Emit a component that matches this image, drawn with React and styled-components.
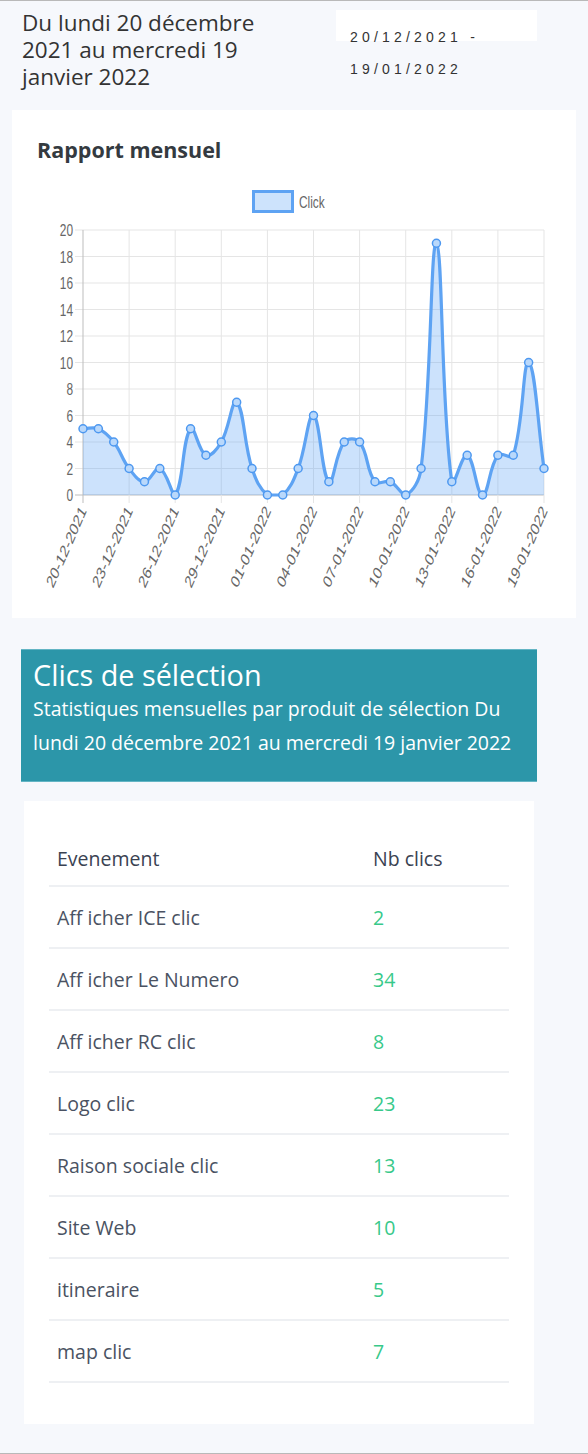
import React from "react";
import styled, { createGlobalStyle } from "styled-components";

const GlobalStyle = createGlobalStyle`
  body {
    margin: 0;
    background: #f6f8fc;
    font-family: "Open Sans", "Noto Sans", sans-serif;
  }
`;

const values = [5, 5, 4, 2, 1, 2, 0, 5, 3, 4, 7, 2, 0, 0, 2, 6, 1, 4, 4, 1, 1, 0, 2, 19, 1, 3, 0, 3, 3, 10, 2];
const startDate = new Date(2021, 11, 20);

const events = [
  { name: "Aff icher ICE clic", count: 2 },
  { name: "Aff icher Le Numero", count: 34 },
  { name: "Aff icher RC clic", count: 8 },
  { name: "Logo clic", count: 23 },
  { name: "Raison sociale clic", count: 13 },
  { name: "Site Web", count: 10 },
  { name: "itineraire", count: 5 },
  { name: "map clic", count: 7 },
];

// chart geometry (svg coords)
const W = 564;
const H = 430;
const L = 71;
const R = 532;
const T = 50;
const B = 315;
const xAt = (i) => L + (i * (R - L)) / (values.length - 1);
const yAt = (v) => B - (v * (B - T)) / 20;
const clampY = (y) => Math.min(B, Math.max(T, y));

const fmtDate = (i) => {
  const d = new Date(startDate);
  d.setDate(d.getDate() + i);
  const p = (n) => String(n).padStart(2, "0");
  return `${p(d.getDate())}-${p(d.getMonth() + 1)}-${d.getFullYear()}`;
};

const buildPath = () => {
  const pts = values.map((v, i) => ({ x: xAt(i), y: yAt(v) }));
  const t = 0.4;
  const cps = pts.map((p, i) => {
    const prev = pts[i - 1] || p;
    const next = pts[i + 1] || p;
    const d01 = Math.hypot(p.x - prev.x, p.y - prev.y);
    const d12 = Math.hypot(next.x - p.x, next.y - p.y);
    let s01 = d01 / (d01 + d12);
    let s12 = d12 / (d01 + d12);
    if (isNaN(s01)) s01 = 0;
    if (isNaN(s12)) s12 = 0;
    const fa = t * s01;
    const fb = t * s12;
    return {
      c1: { x: p.x - fa * (next.x - prev.x), y: clampY(p.y - fa * (next.y - prev.y)) },
      c2: { x: p.x + fb * (next.x - prev.x), y: clampY(p.y + fb * (next.y - prev.y)) },
    };
  });
  let d = `M${pts[0].x},${pts[0].y}`;
  for (let i = 1; i < pts.length; i++) {
    const a = cps[i - 1].c2;
    const b = cps[i].c1;
    d += ` C${a.x},${a.y} ${b.x},${b.y} ${pts[i].x},${pts[i].y}`;
  }
  return { pts, d };
};

const { pts, d: linePath } = buildPath();
const areaPath = `${linePath} L${R},${B} L${L},${B} Z`;

const Chart = () => (
  <ChartSvg width={W} height={H} viewBox={`0 0 ${W} ${H}`}>
    {/* legend */}
    <rect x="241.5" y="11.5" width="39" height="20" fill="#cde3fc" stroke="#5ea3f3" strokeWidth="3" />
    <text transform="translate(287 28) scale(0.7 1)" fontSize="17" fill="#666" fontFamily="Liberation Sans, sans-serif">
      Click
    </text>

    {/* horizontal grid + y ticks */}
    {Array.from({ length: 11 }, (_, k) => {
      const y = yAt(k * 2);
      return (
        <g key={k}>
          <line x1={L - 8} x2={R} y1={y} y2={y} stroke={k === 0 ? "#bdbdbd" : "#e5e5e5"} strokeWidth="1" />
          <text
            transform={`translate(${L - 10} ${y + 6}) scale(0.7 1)`}
            textAnchor="end"
            fontSize="17"
            fill="#666"
            fontFamily="Liberation Sans, sans-serif"
          >
            {k * 2}
          </text>
        </g>
      );
    })}

    {/* vertical grid + x labels */}
    {values.map((_, i) =>
      i % 3 === 0 ? (
        <g key={i}>
          <line x1={xAt(i)} x2={xAt(i)} y1={T} y2={B + 8} stroke={i === 0 ? "#bdbdbd" : "#e5e5e5"} strokeWidth="1" />
          <text
            transform={`translate(${xAt(i) + 4} ${B + 16}) scale(0.7 1) rotate(-58)`}
            textAnchor="end"
            fontSize="18"
            fill="#666"
            fontFamily="Liberation Sans, sans-serif"
          >
            {fmtDate(i)}
          </text>
        </g>
      ) : null
    )}

    <path d={areaPath} fill="rgba(96, 165, 245, 0.32)" />
    <path d={linePath} fill="none" stroke="#5ea3f3" strokeWidth="3.2" strokeLinejoin="round" />
    {pts.map((p, i) => (
      <circle key={i} cx={p.x} cy={p.y} r="4" fill="#b9d8fb" stroke="#4d98f0" strokeWidth="1.5" />
    ))}
  </ChartSvg>
);

const App = () => {
  return (
    <Page>
      <GlobalStyle />
      <Header>
        <PeriodTitle>Du lundi 20 décembre 2021 au mercredi 19 janvier 2022</PeriodTitle>
        <DateBox>20/12/2021 - 19/01/2022</DateBox>
      </Header>

      <ChartCard>
        <CardTitle>Rapport mensuel</CardTitle>
        <Chart />
      </ChartCard>

      <Banner>
        <BannerTitle>Clics de sélection</BannerTitle>
        <BannerText>
          Statistiques mensuelles par produit de sélection Du lundi 20 décembre 2021 au mercredi 19 janvier 2022
        </BannerText>
      </Banner>

      <TableCard>
        <Table>
          <thead>
            <tr>
              <Th $first>Evenement</Th>
              <Th>Nb clics</Th>
            </tr>
          </thead>
          <tbody>
            {events.map((e) => (
              <tr key={e.name}>
                <Td>{e.name}</Td>
                <Td $count>{e.count}</Td>
              </tr>
            ))}
          </tbody>
        </Table>
      </TableCard>
    </Page>
  );
};

export default App;

const Page = styled.div`
  min-height: 1454px;
  box-sizing: border-box;
  border-top: 1px solid #b9b9b9;
  border-bottom: 1px solid #b9b9b9;
  padding-bottom: 29px;
`;

const Header = styled.div`
  display: flex;
  align-items: flex-start;
  padding: 8px 0 0 22px;
`;

const PeriodTitle = styled.div`
  width: 258px;
  font-size: 22.5px;
  line-height: 27px;
  color: #333;
`;

const DateBox = styled.div`
  margin-top: 1px;
  margin-left: 56px;
  width: 201px;
  height: 31px;
  box-sizing: border-box;
  padding: 11px 12px 0 14px;
  background: #fff;
  font-family: "Liberation Sans", Arial, sans-serif;
  font-size: 14px;
  line-height: 32px;
  letter-spacing: 4.2px;
  color: #333;
`;

const ChartCard = styled.div`
  margin: 20px 12px 0;
  padding: 27px 0 8px;
  background: #fff;
`;

const CardTitle = styled.h2`
  margin: 0 0 17px 25px;
  font-size: 21.5px;
  line-height: 26px;
  font-weight: 700;
  color: #343a40;
`;

const ChartSvg = styled.svg`
  display: block;
`;

const Banner = styled.div`
  margin: 31px 51px 0 21px;
  padding: 8px 12px 21px;
  background: #2c96a9;
  border-top: 1px solid #63b5c4;
  border-bottom: 1px solid #63b5c4;
  color: #fff;
`;

const BannerTitle = styled.div`
  font-size: 28.8px;
  line-height: 34px;
`;

const BannerText = styled.div`
  font-size: 19.5px;
  line-height: 34px;
`;

const TableCard = styled.div`
  margin: 19px 54px 0 24px;
  padding: 30px 25px 41px;
  background: #fff;
`;

const Table = styled.table`
  width: 100%;
  border-collapse: collapse;
`;

const Th = styled.th`
  width: ${(p) => (p.$first ? "300px" : "auto")};
  height: 54px;
  padding: 0 8px;
  text-align: left;
  font-size: 19.5px;
  font-weight: 500;
  color: #3a4252;
  border-bottom: 2px solid #eef0f3;
`;

const Td = styled.td`
  height: 60px;
  padding: 0 8px;
  font-size: 19.5px;
  color: ${(p) => (p.$count ? "#38c98a" : "#4a5262")};
  border-bottom: 2px solid #eef0f3;
`;
